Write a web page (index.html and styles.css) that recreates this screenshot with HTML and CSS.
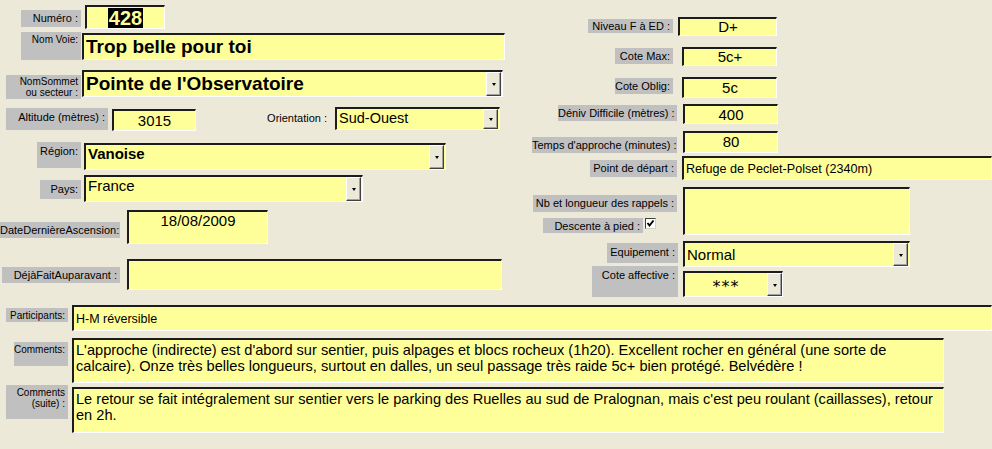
FILE: index.html
```html
<!DOCTYPE html>
<html>
  <head>
    <title>Fiche voie</title>
    <link rel="stylesheet" href="styles.css">
  </head>
  <body>
    <div class="form">
      <div class="top">
        <div class="col-left">
          <div class="row r-numero">
            <div class="lbl lbl-numero">Numéro :</div>
            <div class="fld fld-numero"><span class="sel">428</span></div>
          </div>
          <div class="row r-voie">
            <div class="lbl lbl-sm lbl-voie">Nom Voie:</div>
            <div class="fld fld-big fld-voie">Trop belle pour toi</div>
          </div>
          <div class="row r-sommet">
            <div class="lbl lbl-sm lbl-sommet">NomSommet<br>ou secteur :</div>
            <div class="fld fld-big fld-sommet">
              <span class="txt">Pointe de l'Observatoire</span>
              <span class="dd"></span>
            </div>
          </div>
          <div class="row r-alt">
            <div class="lbl lbl-alt">Altitude (mètres) :</div>
            <div class="fld fld-mid fld-alt">3015</div>
            <div class="plain lbl-orient">Orientation :</div>
            <div class="fld fld-orient">
              <span class="txt">Sud-Ouest</span>
              <span class="dd"></span>
            </div>
          </div>
          <div class="row r-region">
            <div class="lbl lbl-region">Région:</div>
            <div class="fld fld-region">
              <span class="txt">Vanoise</span>
              <span class="dd"></span>
            </div>
          </div>
          <div class="row r-pays">
            <div class="lbl lbl-pays">Pays:</div>
            <div class="fld fld-pays">
              <span class="txt">France</span>
              <span class="dd"></span>
            </div>
          </div>
          <div class="row r-date">
            <div class="lbl lbl-date">DateDernièreAscension:</div>
            <div class="fld fld-date">18/08/2009</div>
          </div>
          <div class="row r-deja">
            <div class="lbl lbl-deja">DéjàFaitAuparavant :</div>
            <div class="fld fld-deja"></div>
          </div>
        </div>

        <div class="col-right">
          <div class="row r-niveau">
            <div class="lbl lbl-niveau">Niveau F à ED :</div>
            <div class="fld fld-mid fld-niveau">D+</div>
          </div>
          <div class="row r-max">
            <div class="lbl lbl-max">Cote Max:</div>
            <div class="fld fld-mid fld-max">5c+</div>
          </div>
          <div class="row r-oblig">
            <div class="lbl lbl-max">Cote Oblig:</div>
            <div class="fld fld-mid fld-oblig">5c</div>
          </div>
          <div class="row r-deniv">
            <div class="lbl lbl-deniv">Déniv Difficile (mètres) :</div>
            <div class="fld fld-mid fld-deniv">400</div>
          </div>
          <div class="row r-temps">
            <div class="lbl lbl-temps">Temps d'approche (minutes) :</div>
            <div class="fld fld-mid fld-temps">80</div>
          </div>
          <div class="row r-depart">
            <div class="lbl lbl-depart">Point de départ :</div>
            <div class="fld fld-depart">Refuge de Peclet-Polset (2340m)</div>
          </div>
          <div class="row r-rappels">
            <div class="stack">
              <div class="lbl lbl-rappels">Nb et longueur des rappels :</div>
              <div class="descente">
                <div class="lbl lbl-descente">Descente à pied :</div>
                <span class="check">
                  <svg width="9" height="9" viewBox="0 0 9 9"><path d="M1.5 4 L3.5 6.5 L7.5 1.5" fill="none" stroke="#000" stroke-width="2"/></svg>
                </span>
              </div>
            </div>
            <div class="fld fld-rappels"></div>
          </div>
          <div class="row r-equip">
            <div class="lbl lbl-equip">Equipement :</div>
            <div class="fld fld-equip">
              <span class="txt">Normal</span>
              <span class="dd"></span>
            </div>
          </div>
          <div class="row r-affect">
            <div class="lbl lbl-affect">Cote affective :</div>
            <div class="fld fld-affect">
              <span class="txt stars">***</span>
              <span class="dd"></span>
            </div>
          </div>
        </div>
      </div>

      <div class="bottom">
        <div class="row r-part">
          <div class="lbl lbl-sm lbl-part">Participants:</div>
          <div class="fld fld-part">H-M réversible</div>
        </div>
        <div class="row r-com">
          <div class="lbl lbl-sm lbl-com">Comments:</div>
          <div class="fld fld-memo fld-com">L'approche (indirecte) est d'abord sur sentier, puis alpages et blocs rocheux (1h20). Excellent rocher en général (une sorte de<br>calcaire). Onze très belles longueurs, surtout en dalles, un seul passage très raide 5c+ bien protégé. Belvédère !</div>
        </div>
        <div class="row r-suite">
          <div class="lbl lbl-sm lbl-suite">Comments<br>(suite) :</div>
          <div class="fld fld-memo fld-suite">Le retour se fait intégralement sur sentier vers le parking des Ruelles au sud de Pralognan, mais c'est peu roulant (caillasses), retour<br>en 2h.</div>
        </div>
      </div>
    </div>
  </body>
</html>
```

FILE: styles.css
```css
body {
  margin: 0;
  background-color: #ece9d8;
  font-family: "Liberation Sans", Arial, sans-serif;
  color: #000000;
}

.form {
  width: 992px;
  height: 449px;
  overflow: hidden;
}

.top {
  display: flex;
  height: 297px;
}

.col-left {
  width: 520px;
  flex: none;
}

.col-right {
  flex: 1;
}

.row {
  display: flex;
  align-items: flex-start;
}

/* grey labels */
.lbl {
  flex: none;
  box-sizing: border-box;
  background-color: #c0c0c0;
  font-size: 11px;
  line-height: 12px;
  text-align: right;
  padding: 2px 3px 0 0;
  white-space: nowrap;
}

.lbl-sm {
  font-size: 10px;
  line-height: 11px;
}

.plain {
  flex: none;
  font-size: 11px;
  line-height: 12px;
  text-align: right;
}

/* yellow sunken fields */
.fld {
  flex: none;
  box-sizing: border-box;
  display: flex;
  background-color: #ffff99;
  border-style: solid;
  border-width: 2px 1px 1px 2px;
  border-color: #1c1c1c #ffffff #ffffff #1c1c1c;
  font-size: 15px;
  line-height: 18px;
  padding: 0 2px;
  white-space: nowrap;
  overflow: hidden;
}

.fld .txt {
  flex: 1;
}

.fld-big {
  font-size: 19px;
  font-weight: bold;
  align-items: center;
}

.fld-mid {
  justify-content: center;
  align-items: center;
}

/* combo box button */
.dd {
  flex: none;
  position: relative;
  width: 15px;
  margin: 0 0 0 2px;
  align-self: stretch;
  box-sizing: border-box;
  background-color: #ece9d8;
  border-style: solid;
  border-width: 1px;
  border-color: #ffffff #404040 #404040 #ffffff;
  box-shadow: inset -1px -1px 0 #a0a0a0;
}

.dd::after {
  content: "";
  position: absolute;
  left: 5px;
  top: 50%;
  margin-top: -1px;
  border-left: 2px solid transparent;
  border-right: 2px solid transparent;
  border-top: 3px solid #000000;
}

/* left column */
.r-numero { margin-top: 5px; }
.lbl-numero { margin: 5px 0 0 21px; width: 60px; height: 17px; }
.fld-numero {
  margin-left: 4px;
  width: 80px;
  height: 24px;
  justify-content: center;
  align-items: center;
  font-size: 20px;
  font-weight: bold;
}
.sel {
  background-color: #000000;
  color: #ffff99;
  line-height: 20px;
  padding: 0 1px;
}

.r-voie { margin-top: 3px; }
.lbl-voie { margin-left: 21px; width: 60px; height: 28px; }
.fld-voie { margin: 1px 0 0 1px; width: 423px; height: 27px; }

.r-sommet { margin-top: 10px; }
.lbl-sommet { margin: 5px 0 0 6px; width: 75px; height: 24px; padding-top: 1px; }
.fld-sommet { margin-left: 1px; width: 421px; height: 27px; padding-right: 1px; }

.r-alt { margin-top: 8px; }
.lbl-alt { margin: 1px 0 0 6px; width: 102px; height: 22px; padding-top: 3px; }
.fld-alt { margin: 2px 0 0 4px; width: 84px; height: 22px; }
.lbl-orient { margin: 5px 0 0 11px; width: 120px; }
.fld-orient { margin-left: 8px; width: 165px; height: 23px; padding-right: 1px; font-size: 14.5px; }

.r-region { margin-top: 11px; }
.lbl-region { margin-left: 37px; width: 44px; height: 26px; padding-top: 3px; }
.fld-region { margin: 1px 0 0 3px; width: 362px; height: 27px; font-weight: bold; padding-right: 1px; }

.r-pays { margin-top: 5px; }
.lbl-pays { margin: 5px 0 0 40px; width: 41px; height: 19px; padding-top: 3px; }
.fld-pays { margin-left: 3px; width: 279px; height: 27px; padding-right: 1px; }

.r-date { margin-top: 8px; }
.lbl-date { margin: 12px 0 0 0; width: 120px; height: 16px; }
.fld-date { margin-left: 7px; width: 141px; height: 34px; justify-content: center; }

.r-deja { margin-top: 15px; }
.lbl-deja { margin: 8px 0 0 2px; width: 118px; height: 16px; }
.fld-deja { margin-left: 7px; width: 375px; height: 31px; }

/* right column */
.r-niveau { margin-top: 17px; }
.lbl-niveau { margin: 2px 0 0 68px; width: 85px; height: 14px; padding-top: 1px; }
.fld-niveau { margin-left: 5px; width: 99px; height: 19px; }

.r-max { margin-top: 11px; }
.lbl-max { margin: 1px 0 0 95px; width: 58px; height: 16px; }
.fld-max { margin-left: 9px; width: 95px; height: 19px; }

.r-oblig { margin-top: 11px; }
.fld-oblig { margin-left: 9px; width: 95px; height: 21px; }

.r-deniv { margin-top: 6px; }
.lbl-deniv { margin: 1px 0 0 38px; width: 119px; height: 16px; }
.fld-deniv { margin-left: 6px; width: 95px; height: 20px; }

.r-temps { margin-top: 7px; }
.lbl-temps { margin: 6px 0 0 12px; width: 145px; height: 16px; }
.fld-temps { margin-left: 6px; width: 95px; height: 22px; align-items: flex-start; }

.r-depart { margin-top: 3px; }
.lbl-depart { margin: 4px 0 0 70px; width: 87px; height: 17px; }
.fld-depart { margin-left: 5px; width: 310px; height: 24px; font-size: 12.6px; align-items: center; }

.r-rappels { margin-top: 7px; }
.stack { flex: none; width: 144px; margin-left: 13px; }
.lbl-rappels { margin-top: 8px; width: 144px; height: 17px; }
.descente { display: flex; margin-top: 6px; }
.lbl-descente { margin-left: 10px; width: 100px; height: 15px; }
.check {
  flex: none;
  box-sizing: border-box;
  width: 11px;
  height: 11px;
  margin-left: 2px;
  background-color: #ffffff;
  border-style: solid;
  border-width: 1px;
  border-color: #404040 #d4d0c8 #d4d0c8 #404040;
  display: flex;
  align-items: center;
  justify-content: center;
}
.fld-rappels { margin-left: 6px; width: 227px; height: 48px; }

.r-equip { margin-top: 6px; }
.lbl-equip { margin: 2px 0 0 87px; width: 71px; height: 20px; padding-top: 3px; }
.fld-equip { margin-left: 5px; width: 227px; height: 26px; align-items: center; padding-right: 1px; }

.r-affect { margin-top: -1px; }
.lbl-affect { margin-left: 72px; width: 86px; height: 31px; padding-top: 3px; }
.fld-affect { margin: 5px 0 0 5px; width: 100px; height: 26px; padding-right: 0; align-items: center; }
.fld-affect .txt { text-align: center; align-self: center; }
.stars {
  font-family: "DejaVu Sans", sans-serif;
  font-size: 16px;
  letter-spacing: 1px;
  line-height: 16px;
  padding-top: 4px;
}

/* bottom part */
.r-part { margin-top: 8px; }
.lbl-part { margin: 3px 0 0 6px; width: 62px; height: 14px; }
.fld-part { margin-left: 4px; width: 920px; height: 26px; font-size: 12.5px; align-items: center; }

.fld-memo {
  display: block;
  font-size: 14.6px;
  line-height: 16px;
  padding: 2px 2px 0 2px;
}

.r-com { margin-top: 7px; }
.lbl-com { margin: 4px 0 0 14px; width: 54px; height: 24px; }
.fld-com { margin-left: 4px; width: 872px; height: 45px; }

.r-suite { margin-top: 2px; }
.lbl-suite { margin-left: 6px; width: 62px; height: 34px; }
.fld-suite { margin: 2px 0 0 4px; width: 872px; height: 46px; }
```
